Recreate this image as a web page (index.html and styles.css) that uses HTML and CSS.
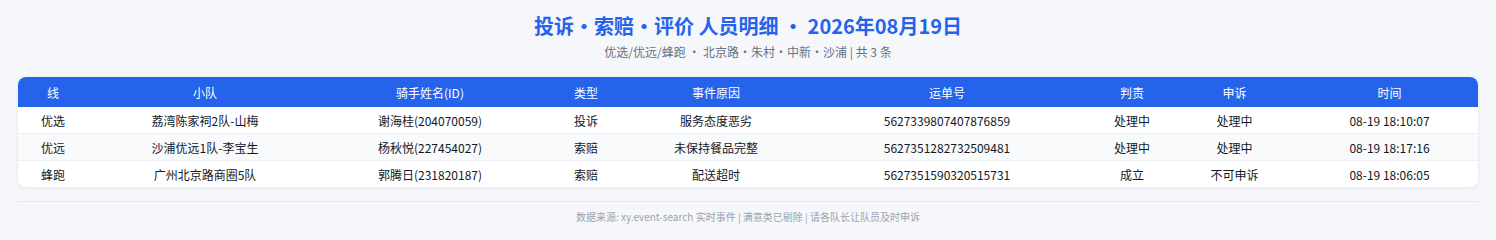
FILE: index.html
```html
<!DOCTYPE html>
<html lang="zh-CN">
<head>
<meta charset="utf-8">
<link rel="stylesheet" href="styles.css">
</head>
<body>
<div class="page">
  <h1 class="title">投诉·索赔·评价 人员明细 · 2026年08月19日</h1>
  <div class="subtitle">优选/优远/蜂跑 · 北京路·朱村·中新·沙浦 | 共 3 条</div>
  <div class="card">
    <table class="tbl">
      <colgroup>
        <col class="c1"><col class="c2"><col class="c3"><col class="c4"><col class="c5"><col class="c6"><col class="c7"><col class="c8"><col class="c9">
      </colgroup>
      <thead>
        <tr><th>线</th><th>小队</th><th>骑手姓名(ID)</th><th>类型</th><th>事件原因</th><th>运单号</th><th>判责</th><th>申诉</th><th>时间</th></tr>
      </thead>
      <tbody>
        <tr><td>优选</td><td>荔湾陈家祠2队-山梅</td><td>谢海桂(204070059)</td><td>投诉</td><td>服务态度恶劣</td><td>5627339807407876859</td><td>处理中</td><td>处理中</td><td>08-19 18:10:07</td></tr>
        <tr class="alt"><td>优远</td><td>沙浦优远1队-李宝生</td><td>杨秋悦(227454027)</td><td>索赔</td><td>未保持餐品完整</td><td>5627351282732509481</td><td>处理中</td><td>处理中</td><td>08-19 18:17:16</td></tr>
        <tr><td>蜂跑</td><td>广州北京路商圈5队</td><td>郭腾日(231820187)</td><td>索赔</td><td>配送超时</td><td>5627351590320515731</td><td>成立</td><td>不可申诉</td><td>08-19 18:06:05</td></tr>
      </tbody>
    </table>
  </div>
  <div class="footer">数据来源: xy.event-search 实时事件 | 满意类已剔除 | 请各队长让队员及时申诉</div>
</div>
</body>
</html>
```
FILE: styles.css
```css
html, body {
  margin: 0;
  padding: 0;
  background: #f5f7fb;
}
body {
  font-family: "Noto Sans CJK SC", "Noto Sans", sans-serif;
  color: #1f2937;
}
.page {
  padding: 12px 18px 0;
}
.title {
  margin: 0;
  text-align: center;
  font-size: 20px;
  line-height: 28px;
  font-weight: 700;
  color: #2563eb;
}
.subtitle {
  margin-top: 3px;
  text-align: center;
  font-size: 12px;
  line-height: 18px;
  color: #6b7280;
}
.card {
  margin-top: 16px;
  background: #fff;
  border-radius: 8px;
  overflow: hidden;
  box-shadow: 0 1px 4px rgba(15, 23, 42, 0.08);
}
.tbl {
  width: 100%;
  border-collapse: collapse;
  table-layout: fixed;
  font-size: 12px;
}
.c1 { width: 70px; }
.c2 { width: 234px; }
.c3 { width: 216px; }
.c4 { width: 96px; }
.c5 { width: 164px; }
.c6 { width: 298px; }
.c7 { width: 72px; }
.c8 { width: 133px; }
.c9 { width: 177px; }
.tbl th {
  background: #2563eb;
  color: #fff;
  font-weight: 400;
  height: 30px;
  padding: 0;
  text-align: center;
}
.tbl td {
  height: 26px;
  padding: 0;
  text-align: center;
  color: #111827;
  border-bottom: 1px solid #eceef2;
}
.tbl tbody tr:last-child td {
  border-bottom: none;
}
.tbl tr.alt td {
  background: #f9fafb;
}
.footer {
  margin-top: 14px;
  border-top: 1px solid #e5e7eb;
  padding-top: 8px;
  text-align: center;
  font-size: 10px;
  line-height: 14px;
  color: #9ca3af;
}
```
